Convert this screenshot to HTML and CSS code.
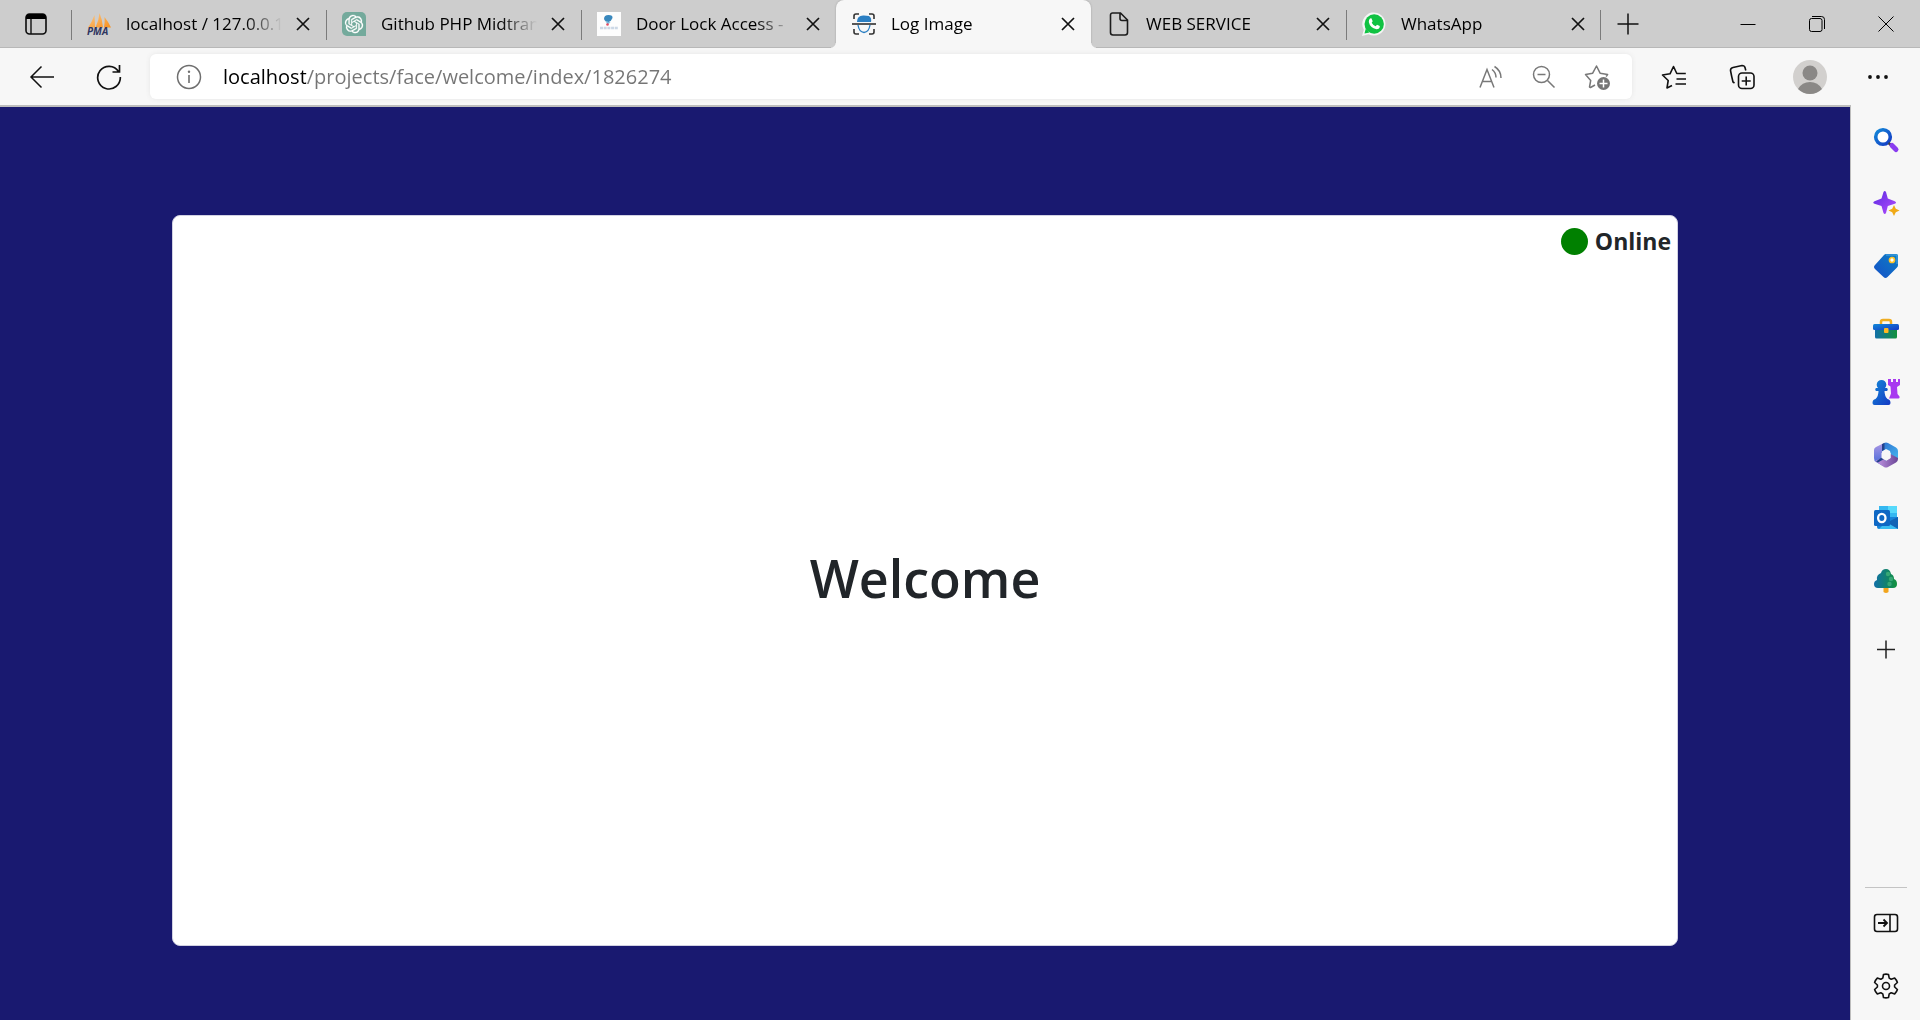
FILE: index.html
```html
<!DOCTYPE html>
<html lang="en">
<head>
<meta charset="utf-8">
<meta name="viewport" content="width=device-width, initial-scale=1">
<title>Log Image</title>
<link rel="stylesheet" href="styles.css">
</head>
<body>
<svg class="defs" aria-hidden="true">
  <defs>
    <symbol id="close" viewBox="0 0 14 14"><path d="M1 1l12 12M13 1L1 13" fill="none" stroke="#111" stroke-width="1.7"/></symbol>
    <linearGradient id="sail" x1="0" y1="0" x2="1" y2="1"><stop offset="0" stop-color="#fbc98a"/><stop offset="1" stop-color="#f8901d"/></linearGradient>
    <linearGradient id="blue" x1="0" y1="0" x2="1" y2="1"><stop offset="0" stop-color="#1389d8"/><stop offset="1" stop-color="#1439c4"/></linearGradient>
    <linearGradient id="violet" x1="0" y1="0" x2="1" y2="1"><stop offset="0" stop-color="#5a2be0"/><stop offset="1" stop-color="#b44dff"/></linearGradient>
    <linearGradient id="bluegreen" x1="0" y1="0" x2="1" y2="0"><stop offset="0" stop-color="#116fa8"/><stop offset="1" stop-color="#12923c"/></linearGradient>
    <linearGradient id="tag" x1="1" y1="0" x2="0" y2="1"><stop offset="0" stop-color="#0d7fc4"/><stop offset="1" stop-color="#1550c8"/></linearGradient>
    <linearGradient id="sky" x1="0" y1="0" x2="1" y2="1"><stop offset="0" stop-color="#2e6fd0"/><stop offset="1" stop-color="#45b6ee"/></linearGradient>
    <linearGradient id="mauve" x1="0" y1="0" x2="1" y2="0"><stop offset="0" stop-color="#c79be8"/><stop offset="1" stop-color="#6a4596"/></linearGradient>
    <linearGradient id="indigo" x1="0" y1="0" x2="0" y2="1"><stop offset="0" stop-color="#a895e4"/><stop offset="1" stop-color="#4068d8"/></linearGradient>
  </defs>
</svg>

<header class="browser">
  <div class="strip">
    <button class="workspace" aria-label="Tab actions">
      <svg width="24" height="24" viewBox="0 0 24 24"><rect x="2" y="2" width="20" height="20" rx="3.5" fill="none" stroke="#0c0c0c" stroke-width="1.6"/><path d="M2 7V5.500a3.500 3.500 0 0 1 3.500-3.500h13A3.500 3.500 0 0 1 22 5.500V7z" fill="#000"/><path d="M7 7v15" stroke="#111" stroke-width="1.400"/></svg>
    </button>
    <nav class="tabs" aria-label="Tabs">
      <div class="tab">
        <button class="tab-main">
          <svg class="favicon" viewBox="0 0 24 24"><path d="M1 15.500Q5 10 7.500 3l.5 12.500zM8.500 15.500Q12 8 12.500 1q3 7 3.500 14.500zM17 15.500Q18 10 17.500 5q4 5 6.500 10.500z" fill="url(#sail)"/><text class="pma" x="0" y="23">PMA</text></svg>
          <span class="title">localhost / 127.0.0.1</span>
        </button>
        <button class="tab-close" aria-label="Close tab"><svg width="14" height="14"><use href="#close"/></svg></button>
      </div>
      <div class="tab">
        <button class="tab-main">
          <svg class="favicon" viewBox="0 0 24 24"><path d="M5 0h14a5 5 0 0 1 5 5v19H5a5 5 0 0 1-5-5V5a5 5 0 0 1 5-5z" fill="#74aa9c"/><g transform="translate(2.900 2.900) scale(.76)" fill="#fff" stroke="#fff" stroke-width=".3"><path d="M22.2819 9.8211a5.9847 5.9847 0 0 0-.5157-4.9108 6.0462 6.0462 0 0 0-6.5098-2.9A6.0651 6.0651 0 0 0 4.9807 4.1818a5.9847 5.9847 0 0 0-3.9977 2.9 6.0462 6.0462 0 0 0 .7427 7.0966 5.98 5.98 0 0 0 .511 4.9107 6.051 6.051 0 0 0 6.5146 2.9001A5.9847 5.9847 0 0 0 13.2599 24a6.0557 6.0557 0 0 0 5.7718-4.2058 5.9894 5.9894 0 0 0 3.9977-2.9001 6.0557 6.0557 0 0 0-.7475-7.0729zm-9.022 12.6081a4.4755 4.4755 0 0 1-2.8764-1.0408l.1419-.0804 4.7783-2.7582a.7948.7948 0 0 0 .3927-.6813v-6.7369l2.02 1.1686a.071.071 0 0 1 .038.052v5.5826a4.504 4.504 0 0 1-4.4945 4.4944zm-9.6607-4.1254a4.4708 4.4708 0 0 1-.5346-3.0137l.142.0852 4.783 2.7582a.7712.7712 0 0 0 .7806 0l5.8428-3.3685v2.3324a.0804.0804 0 0 1-.0332.0615L9.74 19.9502a4.4992 4.4992 0 0 1-6.1408-1.6464zM2.3408 7.8956a4.485 4.485 0 0 1 2.3655-1.9728V11.6a.7664.7664 0 0 0 .3879.6765l5.8144 3.3543-2.0201 1.1685a.0757.0757 0 0 1-.071 0l-4.8303-2.7865A4.504 4.504 0 0 1 2.3408 7.872zm16.5963 3.8558L13.1038 8.364 15.1192 7.2a.0757.0757 0 0 1 .071 0l4.8303 2.7913a4.4944 4.4944 0 0 1-.6765 8.1042v-5.6772a.79.79 0 0 0-.407-.667zm2.0107-3.0231l-.142-.0852-4.7735-2.7818a.7759.7759 0 0 0-.7854 0L9.409 9.2297V6.8974a.0662.0662 0 0 1 .0284-.0615l4.8303-2.7866a4.4992 4.4992 0 0 1 6.6802 4.66zM8.3065 12.863l-2.02-1.1638a.0804.0804 0 0 1-.038-.0567V6.0742a4.4992 4.4992 0 0 1 7.3757-3.4537l-.142.0805L8.704 5.459a.7948.7948 0 0 0-.3927.6813zm1.0976-2.3654l2.602-1.4998 2.6069 1.4998v2.9994l-2.5974 1.4997-2.6067-1.4997Z"/></g></svg>
          <span class="title">Github PHP Midtrans</span>
        </button>
        <button class="tab-close" aria-label="Close tab"><svg width="14" height="14"><use href="#close"/></svg></button>
      </div>
      <div class="tab">
        <button class="tab-main">
          <svg class="favicon" viewBox="0 0 24 24"><path d="M0 0h24v24H0z" fill="#fdfdfd"/><path d="M7 7q0-4 4.500-4T15.500 6q-1 3-4 4Q8 10 7 7z" fill="#3988bd"/><path d="M8.500 9l2 3.500 3-2z" fill="#7eb8dc"/><circle cx="10.500" cy="12.500" r="1.300" fill="#e34b62"/><path d="M3 16h18" stroke="#ccd8e6" stroke-width="2.500" stroke-dasharray="3 .7"/></svg>
          <span class="title">Door Lock Access -</span>
        </button>
        <button class="tab-close" aria-label="Close tab"><svg width="14" height="14"><use href="#close"/></svg></button>
      </div>
      <div class="tab active">
        <button class="tab-main" aria-current="page">
          <svg class="favicon" viewBox="0 0 24 24"><path d="M2 7V4q0-2 2-2h3M17 2h3q2 0 2 2v3M2 17v3q0 2 2 2h3M17 22h3q2 0 2-2v-3" fill="none" stroke="#333" stroke-width="1.600"/><path d="M5 10Q5 3 12 3.500L17 4q3 2 2 6z" fill="#2b7fc3"/><path d="M6 13q1 7 6 7.500Q17 20 18 13" fill="none" stroke="#2b7fc3" stroke-width="1.300"/><path d="M0 12h24" stroke="#444" stroke-width="1.800"/></svg>
          <span class="title">Log Image</span>
        </button>
        <button class="tab-close" aria-label="Close tab"><svg width="14" height="14"><use href="#close"/></svg></button>
      </div>
      <div class="tab">
        <button class="tab-main">
          <svg class="favicon" viewBox="0 0 24 24"><path d="M3.500 3A2 2 0 0 1 5.500 1h8l7 7v12.500a2.500 2.500 0 0 1-2.500 2.500H6A2.500 2.500 0 0 1 3.500 20.500zM13 1v5.500Q13 8.500 15 8.500h5.500" fill="none" stroke="#1c1c1c" stroke-width="1.600"/></svg>
          <span class="title">WEB SERVICE</span>
        </button>
        <button class="tab-close" aria-label="Close tab"><svg width="14" height="14"><use href="#close"/></svg></button>
      </div>
      <div class="tab">
        <button class="tab-main">
          <svg class="favicon" viewBox="0 0 24 24"><path d="M0 24l1.800-6.200A11.600 11.600 0 1 1 6.500 22.300z" fill="#f5f5f5"/><circle cx="12.200" cy="12" r="9.700" fill="#10c242"/><path d="M2.500 21.500l1.300-5 3.700 4z" fill="#10c242"/><path d="M8 6.500l1.400-.2 1.300 3-1 1.400q1.300 2.500 4 3.600l1.300-1.600 2.800 1.400q0 3.200-3.300 3.200Q8 15.800 6.800 10 6.700 7.500 8 6.500z" fill="#fff"/></svg>
          <span class="title">WhatsApp</span>
        </button>
        <button class="tab-close" aria-label="Close tab"><svg width="14" height="14"><use href="#close"/></svg></button>
      </div>
    </nav>
    <button class="new-tab" aria-label="New tab"><svg width="22" height="22" viewBox="0 0 22 22"><path d="M.5 11h21M11 .5v21" stroke="#111" stroke-width="1.500"/></svg></button>
    <div class="window-controls">
      <button aria-label="Minimize"><svg width="16" height="16"><path d="M.5 8.500h15" stroke="#000"/></svg></button>
      <button aria-label="Restore"><svg width="16" height="16" fill="none" stroke="#000"><rect x=".5" y="2.500" width="12.500" height="13" rx="2"/><path d="M3 .5h9.500a3 3 0 0 1 3 3V13"/></svg></button>
      <button aria-label="Close window"><svg width="16" height="16"><path d="M.5.5l15 15M15.500.5l-15 15" stroke="#000"/></svg></button>
    </div>
  </div>

  <div class="toolbar">
    <button class="nav-button" aria-label="Back"><svg width="26" height="24" viewBox="0 0 26 24" fill="none" stroke="#111" stroke-width="1.500"><path d="M25 12H2M12.500 1.500L2 12l10.500 10.500"/></svg></button>
    <button class="nav-button" aria-label="Refresh"><svg width="26" height="26" viewBox="0 0 26 26" fill="none" stroke="#111" stroke-width="1.700"><path d="M24.300 13A11.300 11.300 0 1 1 22.500 7.500M23.500 1v7h-7"/></svg></button>
    <form class="address">
      <button type="button" class="info" aria-label="View site information"><svg width="26" height="26" viewBox="0 0 26 26"><circle cx="13" cy="13" r="11.500" fill="none" stroke="#6e6e6e" stroke-width="1.500"/><path d="M13 11v8" stroke="#6e6e6e" stroke-width="1.600"/><circle cx="13" cy="7.800" r="1.200" fill="#6e6e6e"/></svg></button>
      <input class="url" type="text" aria-label="Address" value="localhost/projects/face/welcome/index/1826274">
      <div class="address-actions">
        <button type="button" aria-label="Read aloud"><svg width="26" height="24" viewBox="0 0 26 24" fill="none" stroke="#787878" stroke-width="1.500"><path d="M2 22.500L9 4.500l7 18M4.500 16.500h9M14 4.500q4 3 4 8M16.500 1.500q6.500 4 6.500 11.500"/></svg></button>
        <button type="button" aria-label="Zoom"><svg width="24" height="24" viewBox="0 0 24 24" fill="none" stroke="#787878" stroke-width="1.500"><circle cx="9.500" cy="9.500" r="8"/><path d="M15.500 15.500l7 7M5.500 9.500h8"/></svg></button>
        <button type="button" aria-label="Add to favorites"><svg width="28" height="26" viewBox="0 0 28 26"><path d="M11 21l-4.500 2.500-1-.5 1.200-6.500L1.500 10.500l7.200-1.300L12.500 2l3.600 7.200 7.500 1.300-1.500 2" fill="none" stroke="#787878" stroke-width="1.500" stroke-linejoin="round"/><circle cx="19.500" cy="19.500" r="6.500" fill="#757575"/><path d="M15.500 19.500h8M19.500 15.500v8" stroke="#fff" stroke-width="1.500"/></svg></button>
      </div>
    </form>
    <div class="tools">
      <button aria-label="Favorites"><svg width="26" height="26" viewBox="0 0 26 26" fill="none" stroke="#111" stroke-width="1.600" stroke-linejoin="round"><path d="M11 21.500L6 24l1.200-7.500L1.500 11l7.500-1.200L12.500 2.500l3.300 7h9M15.500 15h9.500M14.500 20H25"/></svg></button>
      <button aria-label="Collections"><svg width="26" height="26" viewBox="0 0 26 26" fill="none" stroke="#111" stroke-width="1.600"><rect x="9.500" y="9" width="15.500" height="15.500" rx="3.500"/><path d="M17.200 12.500v9M12.700 17h9M5.500 19L4 18Q2.500 12 1.500 6.500 1.500 4 4 3.500L13 1.500q2.500 0 3 2l.8 3"/></svg></button>
      <button aria-label="Profile"><svg width="34" height="34" viewBox="0 0 34 34"><circle cx="17" cy="17" r="17" fill="#d2d0ce"/><circle cx="17" cy="13" r="7.500" fill="#8a8886"/><path d="M5 29Q9 22 17 22t12 7A17 17 0 0 1 5 29z" fill="#8a8886"/></svg></button>
      <button aria-label="Settings and more"><svg width="22" height="6"><g fill="#111"><circle cx="3" cy="3" r="1.900"/><circle cx="11" cy="3" r="1.900"/><circle cx="19" cy="3" r="1.900"/></g></svg></button>
    </div>
  </div>
</header>

<div class="body">
  <main class="page">
    <section class="card">
      <p class="status"><span class="dot"></span>Online</p>
      <h1 class="welcome">Welcome</h1>
    </section>
  </main>

  <aside class="sidebar" aria-label="Sidebar">
    <div class="apps">
      <button aria-label="Search"><svg viewBox="0 0 28 28"><circle cx="11" cy="11" r="7.300" fill="#fff" stroke="url(#blue)" stroke-width="3.600"/><path d="M16.500 17l3.500 3" stroke="#444" stroke-width="2.500"/><path d="M20 19.500l4 4" stroke="#8a3df0" stroke-width="5" stroke-linecap="round"/></svg></button>
      <button aria-label="Discover"><svg viewBox="0 0 28 28"><path d="M11.500 3q1.200-2 2.500 0l1.800 6.500 7 2.700q2.500 1.300 0 2.600l-7 2.200L14 24q-1.300 2-2.500 0l-2-7-7-2.200q-2.500-1.300 0-2.600l7-2.700z" fill="url(#violet)"/><path d="M22 16l1.800 3.700L27.500 21.500l-3.700 1.800L22 27l-1.800-3.700-3.700-1.800 3.700-1.800z" fill="#f0aa17"/></svg></button>
      <button aria-label="Shopping"><svg viewBox="0 0 28 28"><path d="M14 2h10.500Q26 2 26 3.500V13q0 1.500-1 2.500l-9.500 9.500q-2 2-4 0L3 17q-2-2 0-4l9-10q1-1 2-1z" fill="url(#tag)"/><path d="M14 3h11v9" fill="none" stroke="#4ba5e4"/><circle cx="20" cy="8" r="2.500" fill="#fff" stroke="#ffc326" stroke-width="1.700"/></svg></button>
      <button aria-label="Tools"><svg viewBox="0 0 28 28"><path d="M9 10V7q0-2 2-2h6q2 0 2 2v3" fill="none" stroke="#efad22" stroke-width="2.500"/><path d="M3 12h22v10q0 1.500-1.500 1.500h-19Q3 23.500 3 22z" fill="url(#bluegreen)"/><rect x="1" y="9" width="26" height="6" rx="1.500" fill="url(#blue)"/><rect x="12" y="13" width="4.500" height="5" rx="1" fill="#ffb820"/></svg></button>
      <button aria-label="Games"><svg viewBox="0 0 28 28"><path d="M16 1h3v3h2V1h3v3h2V1h2v6l-3 2 .5 7 2 2.500q.5 2-1 2H17l2-5-.5-7L16 7z" fill="#a838f0"/><path d="M6 10a4.800 4.800 0 1 1 7 0h2q1.500 1.500 0 3h-2.500q0 5 3 8 3 .5 3 4 0 2-2 2h-14q-2 0-2-2 0-3.500 3-4 3-3 3-8H4q-1.500-1.500 0-3z" fill="url(#blue)"/></svg></button>
      <button aria-label="Microsoft 365"><svg viewBox="0 0 28 28"><path d="M12 2q2-1 4 0l8 4.500q2 1 2 3.500v8l-7-4-1-4-4-2-5 3V6q0-2 3-4z" fill="url(#sky)"/><path d="M10 3v14l5 3 3-1-7 6-7-4q-2-1-2-4V9q0-2 2-3z" fill="url(#indigo)"/><path d="M3 20l7-3 4 3 4.500-3V13l7.500 4v1q0 2-2 3.500L16 26q-2 1-4 0z" fill="url(#mauve)"/><path d="M10 3v7l2.500-1.500V2zM4 20.500l5.500-4L12 18l-6 3.500z" fill="#24428c"/><path d="M14 9.500l4.500 2.500v5L14 19.500 9.500 17v-5z" fill="#f7f7f7"/></svg></button>
      <button aria-label="Outlook"><svg viewBox="0 0 28 28"><rect x="7" y="2" width="18" height="14" fill="#35b8f1"/><path d="M16 2h9v7h-9z" fill="#56d9fb"/><path d="M5 13h21v12H7q-2 0-2-2z" fill="#1683d9"/><path d="M14 19l12-6v12z" fill="#1263b5"/><path d="M7 25l19 0-12-7z" fill="#39bdf2"/><rect x="2" y="6" width="16" height="16" rx="1.500" fill="#0f68c4"/><ellipse cx="9.800" cy="14" rx="3.700" ry="4.200" fill="none" stroke="#fff" stroke-width="2.300"/></svg></button>
      <button aria-label="E-tree"><svg viewBox="0 0 28 28"><path d="M11.500 19h5v6q-2.500 2-5 0z" fill="#f2a51d"/><path d="M9 6q1-4 5-4t5 5q3 1 3 5 3 1 3 5 0 4-4 4H6q-4 0-4-4 0-3 3-4-1-5 4-7z" fill="url(#bluegreen)"/><g fill="#37a776"><circle cx="16" cy="7" r="2.200"/><circle cx="19" cy="12" r="2.200"/><circle cx="17.500" cy="17" r="2.200"/></g></svg></button>
      <button class="customize" aria-label="Customize"><svg viewBox="0 0 28 28"><path d="M5 15.500h18M14 6.500v18" stroke="#222" stroke-width="1.500"/></svg></button>
    </div>
    <div class="settings">
      <button aria-label="Hide sidebar"><svg viewBox="0 0 28 28" fill="none" stroke="#111" stroke-width="1.600"><rect x="2.500" y="5.500" width="23" height="17" rx="2.500"/><path d="M18 5.500v17"/><path d="M6 14h9M11.500 10.500L15 14l-3.500 3.500" stroke-width="1.800"/></svg></button>
      <button aria-label="Settings"><svg viewBox="0 0 28 28" fill="none" stroke="#111" stroke-width="1.600" stroke-linejoin="round"><path d="M11.500 2.500q2.500-.8 5 0l.7 3.600 2 1.200 3.500-1.200q2 2 2.700 4.400L22.600 13v2l2.800 2.500q-.7 2.400-2.700 4.400l-3.500-1.200-2 1.200-.7 3.600q-2.500.8-5 0l-.7-3.600-2-1.200-3.500 1.200q-2-2-2.700-4.400L5.400 15v-2l-2.800-2.500Q3.300 8.100 5.300 6.100l3.500 1.200 2-1.200z"/><circle cx="14" cy="14" r="3.500"/></svg></button>
    </div>
  </aside>
</div>
</body>
</html>
```
FILE: styles.css
```css
* {
  box-sizing: border-box;
}

body {
  margin: 0;
  min-height: 100vh;
  display: flex;
  flex-direction: column;
  background: #f7f7f7;
  color: #000;
  font-family: "Open Sans", "Noto Sans", sans-serif;
}

button {
  display: flex;
  align-items: center;
  justify-content: center;
  padding: 0;
  border: 0;
  background: none;
  color: inherit;
  font: inherit;
  flex-shrink: 0;
}

svg {
  display: block;
  flex-shrink: 0;
}

.defs {
  position: absolute;
  width: 0;
  height: 0;
}

/* Tab strip */
.strip {
  display: flex;
  height: 48px;
  background: #cdcdcd;
  box-shadow: inset 0 -1px #b8b8b8;
}

.workspace {
  width: 71px;
}

.tabs {
  display: flex;
  flex: 0 1 1530px;
  min-width: 0;
}

.tab {
  position: relative;
  display: flex;
  align-items: center;
  flex: 1 1 0;
  min-width: 0;
  padding: 0 16px;
}

.tab::before {
  content: "";
  position: absolute;
  left: 0;
  top: 10px;
  width: 1px;
  height: 30px;
  background: #7b7b7b;
}

.tab:last-child::after {
  content: "";
  position: absolute;
  right: 0;
  top: 10px;
  width: 1px;
  height: 30px;
  background: #7b7b7b;
}

.tab.active {
  background: #f7f7f7;
  border-radius: 8px 8px 0 0;
  box-shadow: 0 0 2px #999;
  clip-path: inset(0 -6px 0 -6px);
}

.tab.active::before,
.tab.active::after {
  content: "";
  position: absolute;
  top: auto;
  bottom: 0;
  width: 5px;
  height: 5px;
}

.tab.active::before {
  left: -5px;
  background: radial-gradient(circle at 0 0, transparent 4px, #f7f7f7 5px);
}

.tab.active::after {
  right: -5px;
  background: radial-gradient(circle at 100% 0, transparent 4px, #f7f7f7 5px);
}

.tab.active + .tab::before {
  display: none;
}

.tab-main {
  flex: 1 1 0;
  min-width: 0;
  gap: 15px;
  justify-content: flex-start;
}

.favicon {
  width: 24px;
  height: 24px;
  overflow: visible;
}

.pma {
  font: italic 700 10px "Open Sans", sans-serif;
  fill: #2f3560;
}

.title {
  flex: 1;
  min-width: 0;
  overflow: hidden;
  white-space: nowrap;
  text-align: left;
  font-size: 17px;
  line-height: 24px;
  -webkit-mask-image: linear-gradient(to left, transparent, #000 36px);
  mask-image: linear-gradient(to left, transparent, #000 36px);
}

.tab-close {
  width: 14px;
  height: 24px;
  margin-left: 14px;
}

.new-tab {
  width: 54px;
}

.window-controls {
  display: flex;
  margin-left: auto;
}

.window-controls button {
  width: 69px;
}

/* Toolbar */
.toolbar {
  display: flex;
  align-items: center;
  height: 57px;
  padding: 0 8px;
}

.nav-button {
  width: 67px;
  height: 44px;
}

.address {
  display: flex;
  align-items: center;
  flex: 1;
  min-width: 0;
  height: 45px;
  margin-left: 8px;
  padding: 0 20px 0 26px;
  background: #fff;
  border-radius: 6px;
  box-shadow: 0 0 5px #e6e6e6;
}

.url {
  flex: 1;
  min-width: 0;
  height: 40px;
  margin-left: 21px;
  padding: 0;
  border: 0;
  outline: 0;
  font: 20px "Open Sans", "Noto Sans", sans-serif;
  /* host in black, path in grey */
  color: transparent;
  background: linear-gradient(to right, #000 83px, #757575 83px);
  -webkit-background-clip: text;
  background-clip: text;
}

.address-actions {
  display: flex;
  gap: 28px;
}

.tools {
  display: flex;
  align-items: center;
}

.tools button {
  width: 68px;
  height: 44px;
}

.tools button:first-child {
  margin-left: 8px;
}

/* Page and sidebar */
.body {
  display: flex;
  flex: 1;
}

.page {
  flex: 1;
  min-width: 0;
  display: flex;
  padding: 108px 172px 74px;
  background: #191970;
  border-top: 2px solid #bdbdbd;
  border-right: 1px solid #bdbdbd;
}

.card {
  flex: 1;
  display: flex;
  flex-direction: column;
  padding: 6px;
  background: #fff;
  border: 1px solid #d1d1e2;
  border-radius: 8px;
  color: #212529;
}

.status {
  display: flex;
  align-items: center;
  justify-content: flex-end;
  gap: 7px;
  height: 38px;
  margin: 0;
  font-size: 23px;
  font-weight: 700;
}

.dot {
  width: 27px;
  height: 27px;
  border-radius: 50%;
  background: #008000;
}

.welcome {
  margin: auto;
  padding-bottom: 44px;
  font-size: 52px;
  line-height: 64px;
  font-weight: 600;
}

.sidebar {
  display: flex;
  flex-direction: column;
  justify-content: space-between;
  width: 69px;
}

.apps,
.settings {
  display: flex;
  flex-direction: column;
}

.sidebar button {
  height: 63px;
}

.sidebar button svg {
  width: 28px;
  height: 28px;
}

.sidebar .customize {
  height: 71px;
}

.apps {
  padding-top: 3px;
}

.settings {
  margin: 0 13px 0 14px;
  padding: 3px 0;
  border-top: 1px solid #c4c4c4;
}
```
